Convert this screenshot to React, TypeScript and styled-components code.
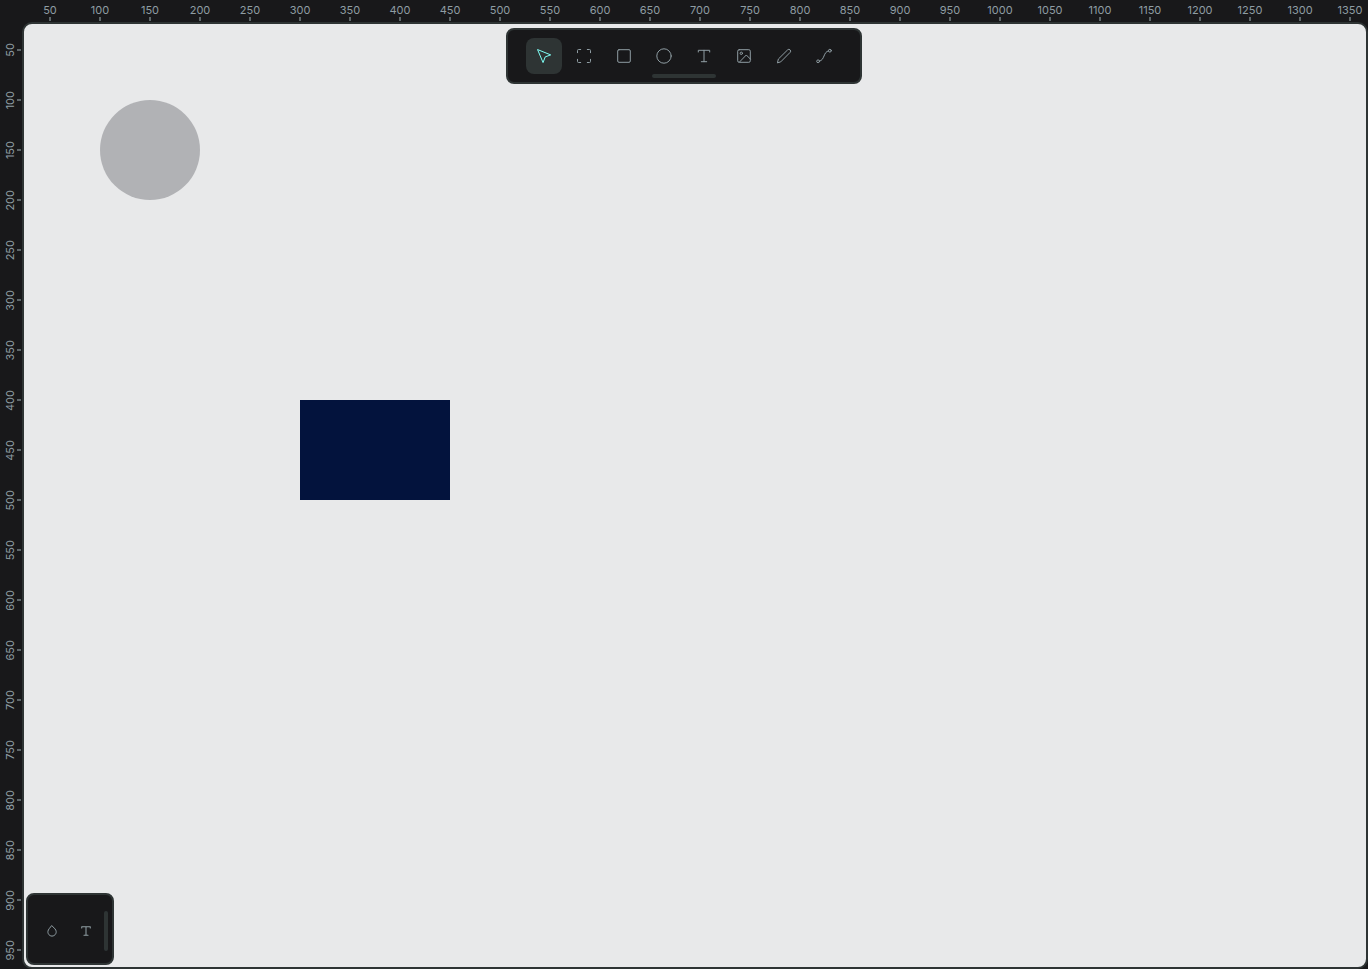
import React, { useState } from "react";
import styled, { createGlobalStyle, css } from "styled-components";

const color = {
  panel: "#18181a",
  line: "#2e3434",
  text: "#8f9da3",
  tick: "#5d6669",
  accent: "#7efff5",
  canvas: "#e8e9ea",
};

const GlobalStyle = createGlobalStyle`
  *, *::before, *::after { box-sizing: border-box; }
  body {
    margin: 0;
    background: ${color.panel};
    font-family: Inter, "Liberation Sans", sans-serif;
  }
`;

const Workspace = styled.main`
  position: relative;
  display: grid;
  grid-template-columns: 22px minmax(0, 1fr);
  grid-template-rows: 22px minmax(0, 1fr);
  height: 100vh;
  overflow: hidden;
  background: ${color.panel};
`;

const Corner = styled.div``;

type Axis = "x" | "y";

const Ruler = styled.div<{ $axis: Axis }>`
  display: flex;
  flex-direction: ${(p) => (p.$axis === "x" ? "row" : "column")};
  padding: ${(p) => (p.$axis === "x" ? "0 0 0 3px" : "3px 0 0 0")};
  overflow: hidden;
`;

const Mark = styled.div<{ $axis: Axis }>`
  flex: 0 0 50px;
  display: flex;
  flex-direction: ${(p) => (p.$axis === "x" ? "column" : "row")};
  align-items: center;
  color: ${color.text};
  font-size: 11px;
  line-height: 14px;
  white-space: nowrap;

  span {
    padding-top: 3px;
    ${(p) =>
      p.$axis === "y" &&
      css`
        padding: 0 0 0 3px;
        width: 17px;
        display: flex;
        justify-content: center;
      `}
  }

  b {
    font-weight: 400;
    ${(p) =>
      p.$axis === "y" &&
      css`
        writing-mode: vertical-rl;
        transform: rotate(180deg);
      `}
  }

  &::after {
    content: "";
    flex: none;
    width: ${(p) => (p.$axis === "x" ? 2 : 4)}px;
    height: ${(p) => (p.$axis === "x" ? 4 : 2)}px;
    background: ${color.tick};
  }
`;

const Viewport = styled.section`
  position: relative;
  border: 2px solid ${color.line};
  border-radius: 10px;
  background: ${color.canvas};
  overflow: hidden;
`;

const Shape = styled.div<{ $x: number; $y: number; $w: number; $h: number; $fill: string; $round?: boolean }>`
  position: absolute;
  left: ${(p) => p.$x - 24}px;
  top: ${(p) => p.$y - 24}px;
  width: ${(p) => p.$w}px;
  height: ${(p) => p.$h}px;
  background: ${(p) => p.$fill};
  border-radius: ${(p) => (p.$round ? "50%" : "0")};
`;

const Panel = styled.div`
  position: absolute;
  display: flex;
  border: 2px solid ${color.line};
  border-radius: 8px;
  background: ${color.panel};
`;

const Toolbar = styled(Panel)`
  top: 28px;
  left: 50%;
  transform: translateX(-50%);
  flex-direction: column;
  align-items: center;
  padding: 8px 18px 4px;
`;

const Palette = styled(Panel)`
  left: 26px;
  bottom: 4px;
  height: 72px;
  align-items: center;
  gap: 2px;
  padding: 4px 4px 0 8px;
`;

const Tools = styled.div`
  display: flex;
  gap: 4px;
`;

const Handle = styled.button<{ $vertical?: boolean }>`
  width: ${(p) => (p.$vertical ? 4 : 64)}px;
  height: ${(p) => (p.$vertical ? 40 : 4)}px;
  padding: 0;
  border: 0;
  border-radius: 2px;
  background: ${color.line};
  cursor: pointer;
`;

const ToolButton = styled.button<{ $active?: boolean; $small?: boolean }>`
  display: grid;
  place-items: center;
  width: ${(p) => (p.$small ? 32 : 36)}px;
  height: ${(p) => (p.$small ? 32 : 36)}px;
  padding: 0;
  border: 0;
  border-radius: 8px;
  background: ${(p) => (p.$active ? color.line : "transparent")};
  color: ${(p) => (p.$active ? color.accent : color.text)};
  cursor: pointer;
`;

const Icon = styled.svg`
  display: block;
  fill: none;
  stroke: currentColor;
  stroke-linecap: round;
  stroke-linejoin: round;
`;

const textGlyph = <path d="M2.3 4V2.3h11.4V4M8 2.3v11.4M5.3 13.7h5.4" />;

const tools = [
  { name: "Move", art: <path d="M1.9 1.7 14.7 6.9 9.2 8.9 7.2 14.2Z" /> },
  {
    name: "Board",
    art: <path d="M1.5 4.7V2.5a1 1 0 0 1 1-1h2.2M11.3 1.5h2.2a1 1 0 0 1 1 1v2.2M14.5 11.3v2.2a1 1 0 0 1-1 1h-2.2M4.7 14.5H2.5a1 1 0 0 1-1-1v-2.2" />,
  },
  { name: "Rectangle", art: <rect x="1.7" y="1.7" width="12.6" height="12.6" rx="1.3" /> },
  { name: "Ellipse", art: <circle cx="8" cy="8" r="7.2" /> },
  { name: "Text", art: textGlyph },
  {
    name: "Image",
    art: (
      <>
        <rect x="1.7" y="1.7" width="12.6" height="12.6" rx="1.5" />
        <circle cx="5.3" cy="5.3" r="1.2" />
        <path d="m3.5 14 6.8-7 4 4" />
      </>
    ),
  },
  {
    name: "Curve",
    art: <path d="M1.5 14.5 2.4 11 11.6 1.9a1.75 1.75 0 0 1 2.5 2.5L5 13.6Z" />,
  },
  {
    name: "Path",
    art: (
      <>
        <circle cx="2.1" cy="13.3" r="1.4" />
        <circle cx="13.9" cy="2.7" r="1.4" />
        <path d="M3.5 13.1C8.8 12.5 7.2 3.5 12.5 2.9" />
      </>
    ),
  },
];

const steps = (count: number) => Array.from({ length: count }, (_, i) => (i + 1) * 50);

function RulerMarks({ axis }: { axis: Axis }) {
  return (
    <Ruler $axis={axis} aria-hidden="true">
      {steps(axis === "x" ? 27 : 19).map((value) => (
        <Mark key={value} $axis={axis}>
          <span>
            <b>{value}</b>
          </span>
        </Mark>
      ))}
    </Ruler>
  );
}

export default function App() {
  const [active, setActive] = useState("Move");

  return (
    <>
      <GlobalStyle />
      <Workspace>
        <Corner />
        <RulerMarks axis="x" />
        <RulerMarks axis="y" />
        <Viewport aria-label="Canvas">
          <Shape $x={100} $y={100} $w={100} $h={100} $fill="#b1b2b5" $round />
          <Shape $x={300} $y={400} $w={150} $h={100} $fill="#03133d" />
        </Viewport>
        <Toolbar role="toolbar" aria-label="Drawing tools">
          <Tools>
            {tools.map(({ name, art }) => (
              <ToolButton
                key={name}
                type="button"
                aria-label={name}
                aria-pressed={active === name}
                $active={active === name}
                onClick={() => setActive(name)}
              >
                <Icon width="16" height="16" viewBox="0 0 16 16">
                  {art}
                </Icon>
              </ToolButton>
            ))}
          </Tools>
          <Handle type="button" aria-label="Toggle toolbar" />
        </Toolbar>
        <Palette role="toolbar" aria-label="Palettes">
          <ToolButton $small type="button" aria-label="Color palette">
            <Icon width="12" height="12" viewBox="0 0 12 12">
              <path d="M6 .8 9 3.9C11.8 7.2 9.2 11.1 6 11.1S.2 7.2 3 3.9Z" />
            </Icon>
          </ToolButton>
          <ToolButton $small type="button" aria-label="Typography palette">
            <Icon width="12" height="12" viewBox="0 0 16 16" strokeWidth="1.4">
              {textGlyph}
            </Icon>
          </ToolButton>
          <Handle $vertical type="button" aria-label="Toggle palettes" />
        </Palette>
      </Workspace>
    </>
  );
}
